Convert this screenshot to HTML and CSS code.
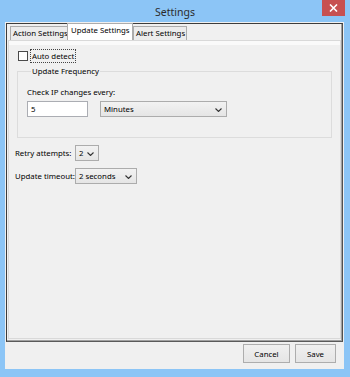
FILE: index.html
```html
<!DOCTYPE html>
<html>
<head>
<meta charset="utf-8">
<link rel="stylesheet" href="styles.css">
</head>
<body>
<div class="window">
  <div class="titlebar">
    <span class="title">Settings</span>
    <span class="close"><svg width="9" height="8" viewBox="0 0 9 8"><path d="M1 0.5 L8 7.5 M8 0.5 L1 7.5" stroke="#fff" stroke-width="1.6"/></svg></span>
  </div>
  <div class="client">
    <div class="frame">
      <div class="tabs">
        <span class="tab">Action Settings</span>
        <span class="tab active">Update Settings</span>
        <span class="tab">Alert Settings</span>
      </div>
      <div class="pane">
        <div class="check"><span class="box"></span><span class="focus">Auto detect</span></div>
        <div class="group">
          <div class="group-title">Update Frequency</div>
          <div class="lbl">Check IP changes every:</div>
          <div class="row">
            <span class="input">5</span>
            <span class="combo c-min">Minutes<svg class="arrow" width="7" height="4" viewBox="0 0 7 4"><path d="M0.5 0.5 L3.5 3.5 L6.5 0.5" fill="none" stroke="#333" stroke-width="1.1"/></svg></span>
          </div>
        </div>
        <div class="fields">
          <span class="flabel">Retry attempts:</span>
          <span class="combo c-retry">2<svg class="arrow" width="7" height="4" viewBox="0 0 7 4"><path d="M0.5 0.5 L3.5 3.5 L6.5 0.5" fill="none" stroke="#333" stroke-width="1.1"/></svg></span>
          <span class="flabel">Update timeout:</span>
          <span class="combo c-time">2 seconds<svg class="arrow" width="7" height="4" viewBox="0 0 7 4"><path d="M0.5 0.5 L3.5 3.5 L6.5 0.5" fill="none" stroke="#333" stroke-width="1.1"/></svg></span>
        </div>
      </div>
    </div>
    <div class="footer">
      <span class="btn b-cancel">Cancel</span>
      <span class="btn b-save">Save</span>
    </div>
  </div>
</div>
</body>
</html>
```

FILE: styles.css
```css
* { box-sizing: border-box; }
html, body {
  margin: 0;
  padding: 0;
}
body {
  width: 350px;
  height: 377px;
  background: #8cc5f6;
  font-family: "Noto Sans", "Liberation Sans", sans-serif;
  font-size: 7.8px;
  color: #000;
  overflow: hidden;
  white-space: nowrap;
}
.window {
  width: 350px;
  height: 377px;
  display: flex;
  flex-direction: column;
}
.titlebar {
  height: 22px;
  display: flex;
  justify-content: center;
  position: relative;
}
.title {
  font-size: 10.5px;
  color: #2b2b2b;
  line-height: 22px;
  padding-top: 1px;
}
.close {
  position: absolute;
  top: 0;
  left: 322px;
  width: 23px;
  height: 16px;
  background: #c75050;
  display: flex;
  align-items: center;
  justify-content: center;
}
.client {
  margin: 0 6px 0 5px;
  height: 347px;
  background: #f0f0f0;
  padding: 1px 1px 0 1px;
  display: flex;
  flex-direction: column;
}
.frame {
  height: 319px;
  border: 1px solid #3c3c3c;
  border-right-color: #505050;
  border-bottom-color: #5a5a5a;
  box-shadow: inset -1px -1px 0 #a0a0a0;
  padding: 0 1px 2px 1px;
  display: flex;
  flex-direction: column;
  background: #f0f0f0;
}
.tabs {
  height: 16px;
  padding: 0 0 0 2px;
  display: flex;
  align-items: flex-end;
  position: relative;
  z-index: 1;
}
.tab {
  height: 14px;
  line-height: 12px;
  border: 1px solid #acacac;
  border-bottom: none;
  background: #ececec;
  padding: 0 0 0 2px;
  overflow: hidden;
}
.tab:first-child { width: 58px; }
.tab.active {
  height: 17px;
  width: 66px;
  background: #fff;
  margin: 0 -1px;
  padding-left: 3px;
  line-height: 13px;
}
.tab:last-child { width: 54px; margin-left: 1px; }
.pane {
  flex: 1;
  border: 1px solid #d9d9d9;
  background: #f0f0f0;
  box-shadow: inset 0 4px 0 #fafafa;
  padding-top: 8px;
}
.check {
  height: 14px;
  margin-left: 9px;
  display: flex;
  align-items: center;
}
.box {
  width: 10px;
  height: 10px;
  border: 1px solid #4a4a4a;
  background: #fff;
  margin-right: 2px;
}
.focus {
  border: 1px dotted #444;
  height: 14px;
  line-height: 12px;
  padding: 0 1px 0 1px;
}
.group {
  margin: 8px 8px 0 8px;
  border: 1px solid #dcdcdc;
  padding: 0 0 20px 9px;
}
.group-title {
  margin: -6px 0 0 4px;
  width: fit-content;
  height: 11px;
  line-height: 11px;
  padding: 0 1px;
  background: #f0f0f0;
}
.lbl {
  margin-top: 9px;
  line-height: 12px;
  height: 12px;
}
.row {
  margin-top: 3px;
  display: flex;
  gap: 12px;
}
.input {
  width: 61px;
  height: 16px;
  border: 1px solid #abadb3;
  background: #fff;
  padding-left: 3px;
  line-height: 14px;
}
.combo {
  height: 16px;
  border: 1px solid #acacac;
  background: linear-gradient(#f2f2f2, #e5e5e5);
  padding-left: 3px;
  line-height: 14px;
  display: flex;
  align-items: center;
  justify-content: space-between;
  padding-right: 4px;
}
.arrow { display: block; margin-top: 1px; }
.c-min { width: 127px; }
.c-retry { width: 24px; }
.c-time { width: 62px; }
.fields {
  margin: 7px 0 0 6px;
  display: grid;
  grid-template-columns: 60px auto;
  justify-content: start;
  row-gap: 7px;
  align-items: center;
}
.footer {
  flex: 1;
  display: flex;
  justify-content: flex-end;
  align-items: flex-start;
  gap: 5px;
  padding: 2px 7px 0 0;
}
.btn {
  height: 19px;
  border: 1px solid #adadad;
  background: linear-gradient(#f0f0f0, #e5e5e5);
  display: flex;
  align-items: center;
  justify-content: center;
  line-height: 12px;
}
.b-cancel { width: 47px; }
.b-save { width: 41px; }
```
